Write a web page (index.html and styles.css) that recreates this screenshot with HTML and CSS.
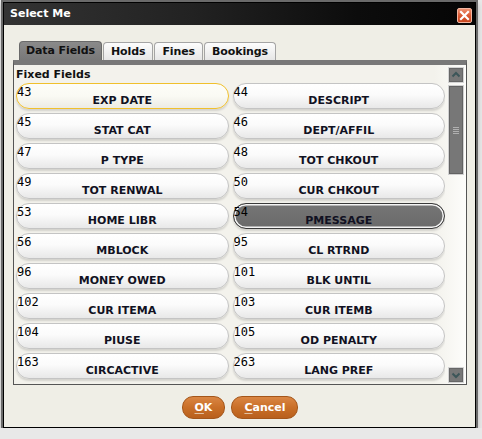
FILE: index.html
```html
<!DOCTYPE html>
<html lang="en">
<head>
  <meta charset="UTF-8">
  <title>Select Me</title>
  <link rel="stylesheet" href="styles.css">
</head>
<body>

  <div class="window">
    <div class="titlebar">
      <span class="title">Select Me</span>
      <button class="close-btn" title="Close">
        <svg width="13" height="13" viewBox="0 0 13 13">
          <path d="M3 3 L10 10 M10 3 L3 10" stroke="#fff" stroke-width="2.2" stroke-linecap="square"/>
        </svg>
      </button>
    </div>

    <div class="window-body">
      <div class="tabs">
        <div class="tab active">Data Fields</div>
        <div class="tab">Holds</div>
        <div class="tab">Fines</div>
        <div class="tab">Bookings</div>
      </div>

      <div class="tab-pane">
        <div class="fields">
          <div class="section-title">Fixed Fields</div>
          <div class="field-grid">
            <button class="field focused"><span class="num">43</span><span class="name">EXP DATE</span></button>
            <button class="field"><span class="num">44</span><span class="name">DESCRIPT</span></button>
            <button class="field"><span class="num">45</span><span class="name">STAT CAT</span></button>
            <button class="field"><span class="num">46</span><span class="name">DEPT/AFFIL</span></button>
            <button class="field"><span class="num">47</span><span class="name">P TYPE</span></button>
            <button class="field"><span class="num">48</span><span class="name">TOT CHKOUT</span></button>
            <button class="field"><span class="num">49</span><span class="name">TOT RENWAL</span></button>
            <button class="field"><span class="num">50</span><span class="name">CUR CHKOUT</span></button>
            <button class="field"><span class="num">53</span><span class="name">HOME LIBR</span></button>
            <button class="field selected"><span class="num">54</span><span class="name">PMESSAGE</span></button>
            <button class="field"><span class="num">56</span><span class="name">MBLOCK</span></button>
            <button class="field"><span class="num">95</span><span class="name">CL RTRND</span></button>
            <button class="field"><span class="num">96</span><span class="name">MONEY OWED</span></button>
            <button class="field"><span class="num">101</span><span class="name">BLK UNTIL</span></button>
            <button class="field"><span class="num">102</span><span class="name">CUR ITEMA</span></button>
            <button class="field"><span class="num">103</span><span class="name">CUR ITEMB</span></button>
            <button class="field"><span class="num">104</span><span class="name">PIUSE</span></button>
            <button class="field"><span class="num">105</span><span class="name">OD PENALTY</span></button>
            <button class="field"><span class="num">163</span><span class="name">CIRCACTIVE</span></button>
            <button class="field"><span class="num">263</span><span class="name">LANG PREF</span></button>
          </div>
        </div>

        <div class="scrollbar">
          <div class="sb-btn">
            <svg width="14" height="14" viewBox="0 0 14 14"><path d="M3.5 8.5 L7 5 L10.5 8.5" fill="none" stroke="#3c5659" stroke-width="2"/></svg>
          </div>
          <div class="sb-thumb"><span class="grip"></span></div>
          <div class="sb-track"></div>
          <div class="sb-btn">
            <svg width="14" height="14" viewBox="0 0 14 14"><path d="M3.5 5.5 L7 9 L10.5 5.5" fill="none" stroke="#3c5659" stroke-width="2"/></svg>
          </div>
        </div>
      </div>

      <div class="actions">
        <button class="action"><u>O</u>K</button>
        <button class="action"><u>C</u>ancel</button>
      </div>
    </div>
  </div>

</body>
</html>
```

FILE: styles.css
```css
* {
  box-sizing: border-box;
}

body {
  margin: 0;
  background: #e8e8e8;
  font-family: 'DejaVu Sans', sans-serif;
  color: #111;
}

button {
  font-family: inherit;
  cursor: pointer;
}

/* window frame */
.window {
  width: 473px;
  height: 426px;
  margin: 2px 0 0 3px;
  border: 1px solid #000;
  box-shadow: 0 0 0 2px #6a6a6a, 0 4px 5px 2px rgba(0, 0, 0, 0.18);
  background: #efeee6;
  display: flex;
  flex-direction: column;
}

.titlebar {
  height: 22px;
  display: flex;
  align-items: flex-start;
  justify-content: space-between;
  padding: 0 3px 0 6px;
  background: linear-gradient(to right, #333 0%, #222 40%, #0c0c0c 75%, #050505 100%);
}

.title {
  color: #fff;
  font-size: 11px;
  font-weight: bold;
  line-height: 22px;
}

.close-btn {
  width: 15px;
  height: 15px;
  margin-top: 5px;
  padding: 0;
  border: 1px solid #f2b8a4;
  border-radius: 2px;
  background: linear-gradient(#ee9070, #d9562f 55%, #c9471f);
  display: flex;
  align-items: center;
  justify-content: center;
}

.window-body {
  flex: 1;
  padding: 16px 8px 0 9px;
  display: flex;
  flex-direction: column;
}

/* tabs */
.tabs {
  display: flex;
  align-items: flex-end;
  gap: 1px;
  height: 19px;
  padding-left: 6px;
}

.tab {
  height: 18px;
  padding: 0 7px;
  font-size: 11px;
  font-weight: bold;
  line-height: 17px;
  letter-spacing: -0.1px;
  border: 1px solid #a4a4a4;
  border-bottom: none;
  border-radius: 4px 4px 0 0;
  background: linear-gradient(#fdfdfd, #e6e6e6);
}

.tab.active {
  height: 19px;
  line-height: 18px;
  padding: 0 6px;
  border-color: #6a6a6a;
  background: linear-gradient(#8a8a8a, #787878);
}

.tab-pane {
  height: 325px;
  display: flex;
  border: 1px solid #555;
  border-top: 5px solid #787878;
  background: linear-gradient(to right, #f3f2ec 0%, #f3f2ec 93%, #fdfdfb 100%);
}

.fields {
  width: 431px;
  padding: 2px 0 0 2px;
  overflow: hidden;
}

.section-title {
  font-size: 11px;
  font-weight: bold;
  line-height: 13px;
  height: 13px;
  margin: 1px 0 2px;
}

.field-grid {
  display: grid;
  grid-template-columns: 1fr 1fr;
  grid-auto-rows: 26px;
  column-gap: 4px;
  row-gap: 4px;
}

.field {
  position: relative;
  height: 26px;
  padding: 8px 4px 0;
  border: 1px solid #c4c4c4;
  border-radius: 13px;
  background: linear-gradient(#ffffff 0%, #fbfbfb 45%, #e8e8e8 100%);
  box-shadow: 0 2px 2px rgba(0, 0, 0, 0.13);
  text-align: center;
  color: #111122;
}

.field .num {
  position: absolute;
  top: 2px;
  left: 0;
  font-family: 'DejaVu Sans Mono', monospace;
  font-size: 12px;
  line-height: 12px;
  color: #000;
}

.field .name {
  display: block;
  font-size: 11px;
  font-weight: bold;
  line-height: 13px;
}

.field.focused {
  border-color: #f0c02c;
  background: linear-gradient(#fdfdf8 0%, #fafaf4 50%, #ecebe4 100%);
}

.field.selected {
  border-color: #3a3a3a;
  background: linear-gradient(#767676, #6a6a6a);
  box-shadow: inset 0 0 0 1.5px #f4f4f4, 0 2px 2px rgba(0, 0, 0, 0.13);
}

/* scrollbar */
.scrollbar {
  width: 16px;
  margin: 2px 2px 1px 3px;
  display: flex;
  flex-direction: column;
}

.sb-btn {
  height: 16px;
  background: #777;
  border: 1px solid #d4d4d4;
  box-shadow: inset 0 0 0 1px #666;
  display: flex;
  align-items: center;
  justify-content: center;
}

.sb-thumb {
  height: 90px;
  margin-top: 2px;
  background: #777;
  border: 1px solid #d0d0d0;
  box-shadow: inset 0 0 0 1px #626262;
  display: flex;
  align-items: center;
  justify-content: center;
}

.grip {
  width: 6px;
  height: 7px;
  background: repeating-linear-gradient(#b0b0b0 0 1px, transparent 1px 2px);
}

.sb-track {
  flex: 1;
}

/* dialog buttons */
.actions {
  display: flex;
  justify-content: center;
  gap: 6px;
  margin-top: 11px;
}

.action {
  height: 23px;
  padding: 0 12px;
  border: 1px solid #a4561a;
  border-radius: 11px;
  background: linear-gradient(#da8644, #c96f28 50%, #b9601d);
  color: #fff;
  font-size: 11px;
  font-weight: bold;
}

.action u {
  text-decoration-color: #e2c0a0;
  text-underline-offset: 2px;
}
```
